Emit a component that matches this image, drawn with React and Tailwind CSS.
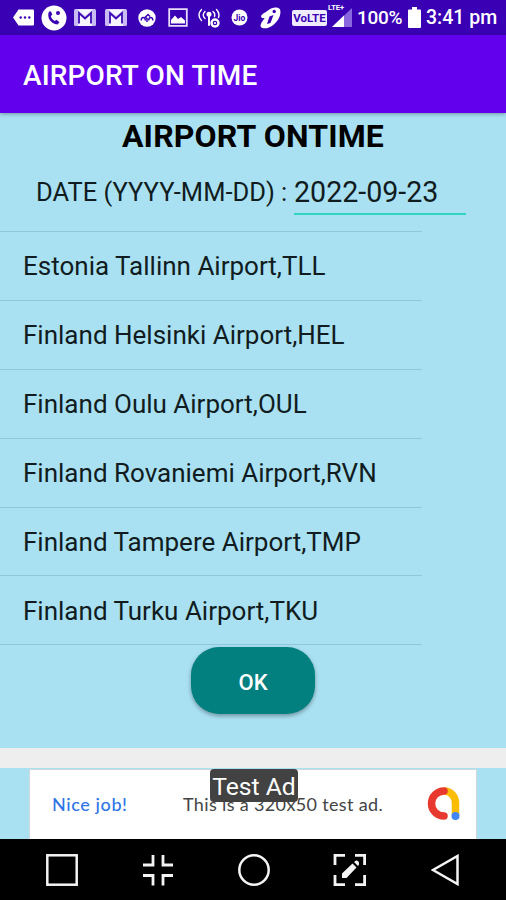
const airports = [
  'Estonia Tallinn Airport,TLL',
  'Finland Helsinki Airport,HEL',
  'Finland Oulu Airport,OUL',
  'Finland Rovaniemi Airport,RVN',
  'Finland Tampere Airport,TMP',
  'Finland Turku Airport,TKU',
];

function GmailIcon({ className }) {
  return (
    <svg viewBox="0 0 22 17" className={`w-[22px] h-[17px] shrink-0 ${className}`}>
      <rect x="0" y="0" width="22" height="17" rx="1.5" fill="#c9bcf2" />
      <path d="M4 17V3L11 9L18 3V17Z" fill="#f7f5ff" />
      <path d="M3 0.500H19L11 7Z" fill="#f7f5ff" />
      <path d="M5 14.500V4L11 9.500L17 4V14.500" fill="none" stroke="#3a08b5" strokeWidth="1.800" />
    </svg>
  );
}

function StatusBar() {
  return (
    <div className="h-[35px] flex items-center bg-[#3900b4] text-white pl-[13px]">
      <svg viewBox="0 0 21 17" className="w-[21px] h-[17px] shrink-0">
        <path d="M5.5 0.5H20a1 1 0 0 1 1 1v14a1 1 0 0 1-1 1H5.500L0 8.500Z" fill="white" />
        <g fill="#3900b4">
          <circle cx="7.700" cy="8.500" r="1.200" />
          <circle cx="12" cy="8.500" r="1.200" />
          <circle cx="16.300" cy="8.500" r="1.200" />
        </g>
      </svg>
      <svg viewBox="0 0 26 26" className="w-[26px] h-[26px] shrink-0 ml-[7px]">
        <circle cx="13" cy="13" r="12.500" fill="white" />
        <path d="M8 6.500C5.500 12 9.500 19 16.500 19.500L18.500 17.200L15.500 14.800L13.800 16C11.700 15 10.300 13.200 9.800 11L11.300 9.800L10 6.500Z" fill="#3900b4" />
        <circle cx="17" cy="8" r="2" fill="#3900b4" />
      </svg>
      <GmailIcon className="ml-[7px]" />
      <GmailIcon className="ml-[9px]" />
      <svg viewBox="0 0 18 18" className="w-[18px] h-[18px] shrink-0 ml-[11px]">
        <circle cx="9" cy="9" r="8.700" fill="white" />
        <g fill="none" stroke="#3900b4" strokeWidth="1.500">
          <path d="M3.500 11.500a2 2 0 1 1 3.500 0M11 11.500a2 2 0 1 1 3.500 0" />
          <path d="M9 13V9.500L7.500 8L10 5.500L12 7.500" />
        </g>
      </svg>
      <svg viewBox="0 0 20 19" className="w-[20px] h-[19px] shrink-0 ml-[12px]">
        <path d="M1.200 1.200H18.800V17.800H1.200Z" fill="none" stroke="#e6defc" strokeWidth="1.800" />
        <path d="M3 15.500V12l4-4.500 3 3.500 3-2 4 3.500V15.500Z" fill="white" />
      </svg>
      <svg viewBox="0 0 23 20" className="w-[23px] h-[20px] shrink-0 ml-[10px]">
        <g fill="none" stroke="white" strokeWidth="1.400" strokeLinecap="round">
          <path d="M3.500 1.500Q-1.500 7 3.500 12.500M18.500 1.500Q22 5 20.500 9.500" />
          <path d="M7 3.500Q3.500 7 7 10.500M15 3.500Q17.500 5.500 16.500 8.500" />
          <path d="M11 7V17" strokeWidth="2" />
        </g>
        <circle cx="11" cy="6.300" r="2.500" fill="white" />
        <circle cx="17" cy="15" r="4.700" fill="white" />
        <circle cx="17" cy="15" r="1.700" fill="none" stroke="#3900b4" strokeWidth="1.200" />
      </svg>
      <svg viewBox="0 0 17 17" className="w-[17px] h-[17px] shrink-0 ml-[10px]">
        <circle cx="8.500" cy="8.500" r="8" fill="white" />
        <text x="8.500" y="11.600" textAnchor="middle" fontSize="8.500" fontWeight="700" fill="#3900b4">Jio</text>
      </svg>
      <svg viewBox="0 0 21 22" className="w-[21px] h-[22px] shrink-0 ml-[12px]">
        <path d="M8 3.500C12 0 18 -0.500 20 2.500C22 8 17 17 9 20.500C5 22 1 21.500 0.500 19C1 15 3.500 13.500 4.500 11C2 11.500 1 10.500 1 9C3 6 5 6 8 3.500Z" fill="white" />
        <path d="M9.500 9.500l4-1.500-3 8-3.500 1Z" fill="#3900b4" />
        <circle cx="14.200" cy="4.500" r="1.700" fill="#3900b4" />
      </svg>
      <div className="w-[35px] h-[16px] shrink-0 ml-[11px] rounded-[2px] bg-[#f0ecff] text-[#3900b4] text-[11.5px] leading-[17px] font-bold text-center whitespace-nowrap">
        VoLTE
      </div>
      <div className="relative ml-[5px] w-[20px] h-[19px] shrink-0">
        <svg viewBox="0 0 20 19" className="w-[20px] h-[19px]">
          <path d="M20 0V19H0Z" fill="#8a67df" />
          <path d="M12 7.600V19H0Z" fill="white" />
        </svg>
        <span className="absolute -left-[4px] -top-[4px] text-[7.500px] leading-[8px] font-bold">LTE+</span>
      </div>
      <span className="ml-[5px] w-[46px] text-[19px] leading-none font-medium tracking-[-0.300px]">100%</span>
      <svg viewBox="0 0 13 21" className="w-[13px] h-[21px] shrink-0 ml-[5px]">
        <path d="M4 0H9V2.500H12Q13 2.500 13 3.500V20Q13 21 12 21H1Q0 21 0 20V3.500Q0 2.500 1 2.500H4Z" fill="white" />
      </svg>
      <span className="ml-[5px] text-[19.500px] leading-none font-medium whitespace-nowrap">3:41 pm</span>
    </div>
  );
}

function AdBanner() {
  return (
    <div className="h-[71px] px-[29px] bg-[#a9e1f3]">
      <div className="relative mt-px h-[70px] bg-white border border-b-0 border-[#d2d8da] flex items-center text-[18px] tracking-[0.350px] font-['Lato']">
        <span className="ml-[22px] w-[131px] text-[#2f75e8] font-medium tracking-[0.600px]">Nice job!</span>
        <span className="text-[#444] whitespace-nowrap">This is a 320x50 test ad.</span>
        <svg viewBox="0 0 36 36" className="absolute left-[396px] top-[16px] w-[36px] h-[36px]">
          <g fill="none" strokeWidth="7.500" strokeLinecap="round">
            <path d="M18 5H19A11 12 0 0 1 29.500 17V29.500" stroke="#fbbc04" strokeLinecap="butt" />
            <path d="M18 5A12.500 12.500 0 0 0 18 30" stroke="#e8392e" />
          </g>
          <circle cx="29.500" cy="30" r="4" fill="#4285f4" />
        </svg>
        <div className="absolute left-[180px] top-[-1px] w-[88px] h-[33px] rounded-[4px] bg-[#424242] text-white text-[24.700px] leading-[35px] tracking-normal text-center whitespace-nowrap font-['Roboto']">
          Test Ad
        </div>
      </div>
    </div>
  );
}

function NavBar() {
  return (
    <div className="h-[61px] bg-black flex items-center justify-between pl-[46px] pr-[47px]">
      <svg viewBox="0 0 32 32" className="w-8 h-8" fill="none" stroke="#f4f4f4" strokeWidth="2.500">
        <rect x="1.300" y="1.300" width="29.400" height="29.400" />
      </svg>
      <svg viewBox="0 0 32 32" className="w-8 h-8" fill="none" stroke="#f4f4f4" strokeWidth="2.800">
        <path d="M11 1V11H1M21 1V11H31M1 21.500H11V31.500M31 21.500H21V31.500" />
      </svg>
      <svg viewBox="0 0 32 32" className="w-8 h-8" fill="none" stroke="#f4f4f4" strokeWidth="2.500">
        <circle cx="16" cy="16" r="14.700" />
      </svg>
      <svg viewBox="0 0 34 34" className="w-[34px] h-[34px]" fill="none" stroke="#f4f4f4" strokeWidth="2.800">
        <path d="M2 12V2.400H12M22 2.400H31.600V12M31.600 22V31.600H22M12 31.600H2V22" />
        <path d="M9 25V20.500L19.500 10.500L23.500 14.500L13.500 25ZM21 9L23 7.500Q25 7 26 9.500Q26.500 11.500 25 13Z" fill="#f4f4f4" stroke="none" />
      </svg>
      <svg viewBox="0 0 28 32" className="w-[28px] h-8" fill="none" stroke="#f4f4f4" strokeWidth="2.500">
        <path d="M26.500 2V30L2 16Z" />
      </svg>
    </div>
  );
}

export default function App() {
  return (
    <div className="w-[506px] h-[900px] overflow-hidden flex flex-col bg-[#a9e1f3] font-['Roboto',sans-serif]">
      <StatusBar />
      <header className="relative z-10 h-[78px] shrink-0 flex items-center pl-[23px] bg-[#6200ee] shadow-[0_1px_4px_rgba(0,0,0,0.35)]">
        <h1 className="text-[28px] leading-none font-medium text-white tracking-[0.150px] pt-[3px]">AIRPORT ON TIME</h1>
      </header>

      <main className="h-[635px] shrink-0 flex flex-col text-[#101c20]">
        <h2 className="h-[46px] text-center text-[32px] leading-[47px] font-bold tracking-[0.150px] text-black">AIRPORT ONTIME</h2>
        <div className="flex pl-[36px] h-[72px]">
          <label className="w-[258px] pt-[18px] text-[25.500px] leading-[30px] whitespace-nowrap">DATE (YYYY-MM-DD) :</label>
          <div className="w-[172px] h-[56px] pt-[17px] border-b-[2px] border-[#2fd5bd] text-[28.600px] leading-[32px]">2022-09-23</div>
        </div>

        <ul className="w-[422px] border-t border-[#91c6d8]">
          {airports.map((name) => (
            <li
              key={name}
              className="h-[68.900px] flex items-center pl-[23px] pt-[2px] border-b border-[#91c6d8] text-[26px] whitespace-nowrap"
            >
              {name}
            </li>
          ))}
        </ul>

        <button className="mt-[2px] mx-auto w-[124px] h-[67px] pt-[3px] shrink-0 rounded-[28px] bg-[#028080] text-white text-[22px] font-medium shadow-[0_2px_4px_rgba(0,0,0,0.35)]">
          OK
        </button>
      </main>

      <div className="h-[20px] shrink-0 bg-[#eeeeee]" />
      <AdBanner />
      <NavBar />
    </div>
  );
}
